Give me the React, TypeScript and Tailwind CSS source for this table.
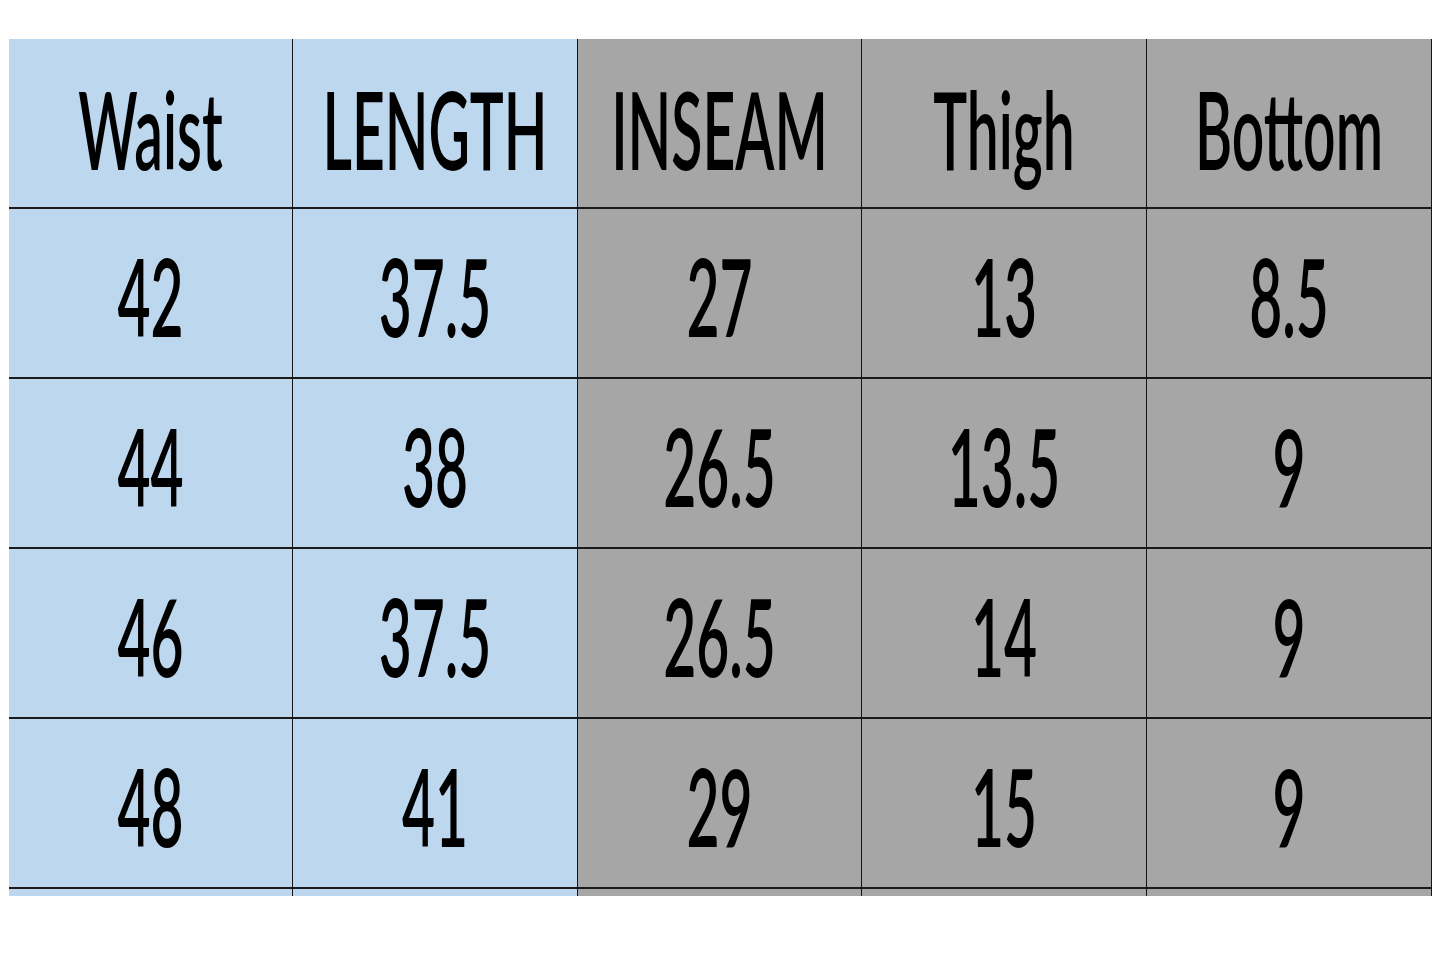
const headers = ["Waist", "LENGTH", "INSEAM", "Thigh", "Bottom"];

const rows = [
  ["42", "37.5", "27", "13", "8.5"],
  ["44", "38", "26.5", "13.5", "9"],
  ["46", "37.5", "26.5", "14", "9"],
  ["48", "41", "29", "15", "9"],
];

const widths = ["w-[284px]", "w-[285px]", "w-[284px]", "w-[285px]", "w-[285px]"];

function Cell(props: { text?: string; col: number; head?: boolean; strip?: boolean }) {
  const bg = props.col < 2 ? "bg-[#bdd7ee]" : "bg-[#a6a6a6]";
  return (
    <div
      className={`${widths[props.col]} ${bg} border-r border-[#141414] ${
        props.strip ? "h-[7px]" : "h-[170px] border-b-2 border-b-[#1a1a1a]"
      } flex items-center justify-center`}
    >
      {props.text ? (
        <span
          className={`inline-block font-['Lato',sans-serif] font-semibold text-[57px] leading-none text-black scale-y-[1.9] ${
            props.head ? "translate-y-[6px]" : "translate-y-[3px]"
          }`}
        >
          {props.text}
        </span>
      ) : null}
    </div>
  );
}

export default function App() {
  return (
    <div className="w-[1445px] h-[963px] bg-white pt-[39px] pl-[9px]">
      <div className="flex flex-col w-[1423px]">
        <div className="flex">
          {headers.map((h, i) => (
            <Cell key={h} text={h} col={i} head />
          ))}
        </div>
        {rows.map((r, ri) => (
          <div key={ri} className="flex">
            {r.map((v, i) => (
              <Cell key={i} text={v} col={i} />
            ))}
          </div>
        ))}
        <div className="flex">
          {headers.map((h, i) => (
            <Cell key={h} col={i} strip />
          ))}
        </div>
      </div>
    </div>
  );
}
